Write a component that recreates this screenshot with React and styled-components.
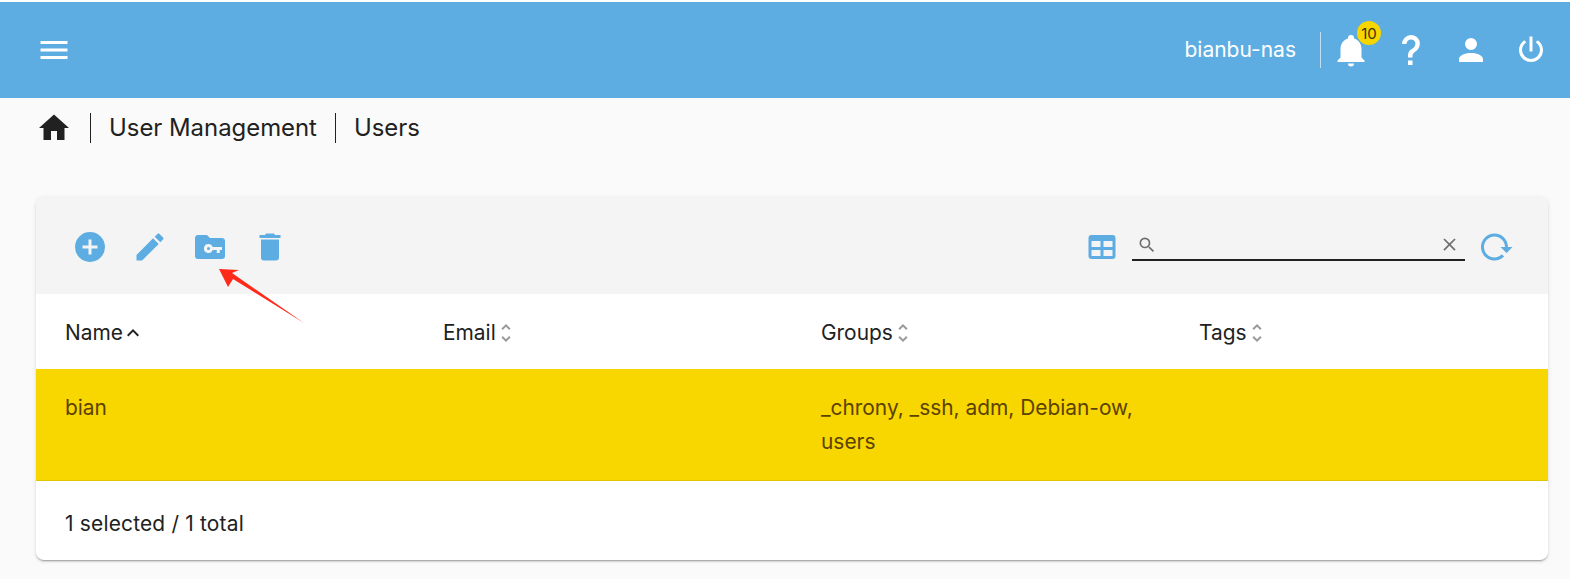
import React from 'react';
import styled, { createGlobalStyle } from 'styled-components';

const GlobalStyle = createGlobalStyle`
  html, body {
    margin: 0;
    padding: 0;
    background: #fafafa;
    font-family: "Inter", "Liberation Sans", sans-serif;
    color: #212121;
  }
`;

const paths = {
  menu: 'M3,6H21V8H3V6M3,11H21V13H3V11M3,16H21V18H3V16Z',
  home: 'M10,20V14H14V20H19V12H22L12,3L2,12H5V20H10Z',
  bell: 'M21,19V20H3V19L5,17V11C5,7.9 7.03,5.17 10,4.29C10,4.19 10,4.1 10,4A2,2 0 0,1 12,2A2,2 0 0,1 14,4C14,4.1 14,4.19 14,4.29C16.97,5.17 19,7.9 19,11V17L21,19M14,21A2,2 0 0,1 12,23A2,2 0 0,1 10,21',
  help: 'M10,19H13V22H10V19M12,2C17.35,2.22 19.68,7.62 16.5,11.67C15.67,12.67 14.33,13.33 13.67,14.17C13,15 13,16 13,17H10C10,15.33 10,13.92 10.67,12.92C11.33,11.92 12.67,11.33 13.5,10.67C15.92,8.43 15.32,5.26 12,5A3,3 0 0,0 9,8H6A6,6 0 0,1 12,2Z',
  account: 'M12,4A4,4 0 0,1 16,8A4,4 0 0,1 12,12A4,4 0 0,1 8,8A4,4 0 0,1 12,4M12,14C16.42,14 20,15.79 20,18V20H4V18C4,15.79 7.58,14 12,14Z',
  power: 'M16.56,5.44L15.11,6.89C16.84,7.94 18,9.83 18,12A6,6 0 0,1 12,18A6,6 0 0,1 6,12C6,9.83 7.16,7.94 8.88,6.88L7.44,5.44C5.36,6.88 4,9.28 4,12A8,8 0 0,0 12,20A8,8 0 0,0 20,12C20,9.28 18.64,6.88 16.56,5.44M13,3H11V13H13',
  plus: 'M17,13H13V17H11V13H7V11H11V7H13V11H17M12,2A10,10 0 0,0 2,12A10,10 0 0,0 12,22A10,10 0 0,0 22,12A10,10 0 0,0 12,2Z',
  pencil: 'M20.71,7.04C21.1,6.65 21.1,6 20.71,5.63L18.37,3.29C18,2.9 17.35,2.9 16.96,3.29L15.12,5.12L18.87,8.87M3,17.25V21H6.75L17.81,9.93L14.06,6.18L3,17.25Z',
  folderKey: 'M10,4H4C2.89,4 2,4.89 2,6V18A2,2 0 0,0 4,20H20A2,2 0 0,0 22,18V8C22,6.89 21.1,6 20,6H12L10,4ZM11,10A3,3 0 0,1 13.8,12H20V14H18.5V16H16.5V14H13.8A3,3 0 1,1 11,10ZM11,12A1,1 0 1,0 11,14A1,1 0 1,0 11,12Z',
  trash: 'M19,4H15.5L14.5,3H9.5L8.5,4H5V6H19M6,19A2,2 0 0,0 8,21H16A2,2 0 0,0 18,19V7H6V19Z',
  table: 'M5,4H19A2,2 0 0,1 21,6V18A2,2 0 0,1 19,20H5A2,2 0 0,1 3,18V6A2,2 0 0,1 5,4M5,8V12H11V8H5M13,8V12H19V8H13M5,14V18H11V14H5M13,14V18H19V14H13Z',
  reload: 'M2 12C2 16.97 6.03 21 11 21C13.39 21 15.68 20.06 17.4 18.4L15.9 16.9C14.63 18.25 12.86 19 11 19C4.76 19 1.64 11.46 6.05 7.05C10.46 2.64 18 5.77 18 12H15L19 16H19.1L23 12H20C20 7.03 15.97 3 11 3C6.03 3 2 7.03 2 12Z',
  search: 'M9.5,3A6.5,6.5 0 0,1 16,9.5C16,11.11 15.41,12.59 14.44,13.73L14.71,14H15.5L20.5,19L19,20.5L14,15.5V14.71L13.73,14.44C12.59,15.41 11.11,16 9.5,16A6.5,6.5 0 0,1 3,9.5A6.5,6.5 0 0,1 9.5,3M9.5,5C7,5 5,7 5,9.5C5,12 7,14 9.5,14C12,14 14,12 14,9.5C14,7 12,5 9.5,5Z',
  close: 'M19,6.41L17.59,5L12,10.59L6.41,5L5,6.41L10.59,12L5,17.59L6.41,19L12,13.41L17.59,19L19,17.59L13.41,12L19,6.41Z',
  chevronUp: 'M7.41,15.41L12,10.83L16.59,15.41L18,14L12,8L6,14L7.41,15.41Z',
  unfold: 'M12,18.17L8.83,15L7.41,16.41L12,21L16.59,16.41L15.17,15M12,5.83L15.17,9L16.59,7.59L12,3L7.41,7.59L8.83,9L12,5.83Z',
};

const Icon = ({ name, size = 36, color = 'currentColor' }) => (
  <IconSvg viewBox="0 0 24 24" $size={size} fill={color}>
    <path d={paths[name]} fillRule="evenodd" />
  </IconSvg>
);

const IconSvg = styled.svg`
  display: block;
  flex: none;
  width: ${props => props.$size}px;
  height: ${props => props.$size}px;
`;

const Page = styled.div`
  position: relative;
  height: 579px;
  overflow: hidden;
`;

const TopBar = styled.header`
  height: 96px;
  border-top: 2px solid #ffffff;
  background: #5dade2;
  color: #ffffff;
  display: flex;
  align-items: center;
  justify-content: space-between;
  padding: 0 9px 0 36px;
`;

const TopActions = styled.div`
  display: flex;
  align-items: center;
`;

const HostName = styled.span`
  font-size: 21px;
  padding-right: 24px;
  border-right: 1px solid rgba(255, 255, 255, 0.6);
  line-height: 36px;
`;

const TopButton = styled.div`
  position: relative;
  width: 60px;
  height: 36px;
  display: flex;
  justify-content: center;
`;

const Badge = styled.span`
  position: absolute;
  top: -11px;
  left: 36px;
  width: 24px;
  height: 24px;
  border-radius: 50%;
  background: #f7d600;
  color: #3f2f00;
  font-size: 15px;
  display: flex;
  align-items: center;
  justify-content: center;
`;

const Breadcrumb = styled.nav`
  height: 60px;
  padding: 12px 0 0 36px;
  box-sizing: border-box;
  display: flex;
  align-items: flex-start;
`;

const Crumb = styled.span`
  font-size: 23.9px;
  line-height: 36px;
  padding: 0 18px 0 19px;
  position: relative;
  &::before {
    content: '';
    position: absolute;
    left: 0;
    top: 3px;
    bottom: 3px;
    width: 1px;
    background: #212121;
  }
`;

const CrumbHome = styled.span`
  width: 36px;
  margin-right: 18px;
`;

const Card = styled.section`
  margin: 39px 22px 19px 36px;
  height: 363px;
  background: #ffffff;
  border-radius: 8px;
  box-shadow: 0 2px 2px -1px rgba(0, 0, 0, 0.35), 0 1px 4px rgba(0, 0, 0, 0.12);
  overflow: hidden;
  font-size: 20.9px;
`;

const Toolbar = styled.div`
  height: 97px;
  box-sizing: border-box;
  background: #f4f4f4;
  display: flex;
  align-items: center;
  justify-content: space-between;
  padding: 3px 34px 0 36px;
  color: #5dade2;
`;

const ToolGroup = styled.div`
  display: flex;
  align-items: center;
  gap: ${props => props.$gap}px;
`;

const SearchField = styled.div`
  width: 333px;
  height: 28px;
  margin-right: 1px;
  box-sizing: border-box;
  border-bottom: 2px solid #212121;
  display: flex;
  align-items: center;
  justify-content: space-between;
  padding: 0 5px 3px 5px;
  color: #707070;
`;

const TableGrid = styled.div`
  display: grid;
  grid-template-columns: repeat(4, 378px);
`;

const HeadCell = styled.div`
  height: 75px;
  box-sizing: border-box;
  padding: 2px 29px 0;
  display: flex;
  align-items: center;
  color: #212121;
`;

const SortIcon = styled.span`
  margin-left: -2px;
  color: ${props => (props.$active ? '#212121' : '#9a9a9a')};
`;

const Row = styled.div`
  grid-column: 1 / -1;
  display: grid;
  grid-template-columns: repeat(4, 378px);
  background: #f8d600;
  color: #5c4200;
  border-bottom: 1px solid #e0c400;
  padding: 22px 0 21px;
  line-height: 34px;
`;

const Cell = styled.div`
  padding: 0 29px;
  min-height: 34px;
`;

const Footer = styled.div`
  height: 79px;
  padding: 5px 29px 0;
  display: flex;
  align-items: center;
  box-sizing: border-box;
  letter-spacing: 0.2px;
`;

const Arrow = styled.svg`
  position: absolute;
  left: 215px;
  top: 262px;
  width: 95px;
  height: 66px;
`;

export default function App() {
  return (
    <Page>
      <GlobalStyle />
      <TopBar>
        <Icon name="menu" />
        <TopActions>
          <HostName>bianbu-nas</HostName>
          <TopButton>
            <Icon name="bell" />
            <Badge>10</Badge>
          </TopButton>
          <TopButton><Icon name="help" /></TopButton>
          <TopButton><Icon name="account" /></TopButton>
          <TopButton><Icon name="power" /></TopButton>
        </TopActions>
      </TopBar>
      <Breadcrumb>
        <CrumbHome><Icon name="home" /></CrumbHome>
        <Crumb>User Management</Crumb>
        <Crumb>Users</Crumb>
      </Breadcrumb>
      <Card>
        <Toolbar>
          <ToolGroup $gap={24}>
            <Icon name="plus" />
            <Icon name="pencil" />
            <Icon name="folderKey" />
            <Icon name="trash" />
          </ToolGroup>
          <ToolGroup $gap={12}>
            <Icon name="table" />
            <SearchField>
              <Icon name="search" size={20} />
              <Icon name="close" size={21} />
            </SearchField>
            <Icon name="reload" />
          </ToolGroup>
        </Toolbar>
        <TableGrid>
          <HeadCell>Name<SortIcon $active><Icon name="chevronUp" size={24} /></SortIcon></HeadCell>
          <HeadCell>Email<SortIcon><Icon name="unfold" size={24} /></SortIcon></HeadCell>
          <HeadCell>Groups<SortIcon><Icon name="unfold" size={24} /></SortIcon></HeadCell>
          <HeadCell>Tags<SortIcon><Icon name="unfold" size={24} /></SortIcon></HeadCell>
          <Row>
            <Cell>bian</Cell>
            <Cell />
            <Cell>_chrony, _ssh, adm, Debian-ow, users</Cell>
            <Cell />
          </Row>
        </TableGrid>
        <Footer>1 selected / 1 total</Footer>
      </Card>
      <Arrow viewBox="0 0 95 66">
        <path d="M4,7 L24,8 L17,11 L89,61 L18,17 L13,25 Z" fill="#ff2a1a" />
      </Arrow>
    </Page>
  );
}
